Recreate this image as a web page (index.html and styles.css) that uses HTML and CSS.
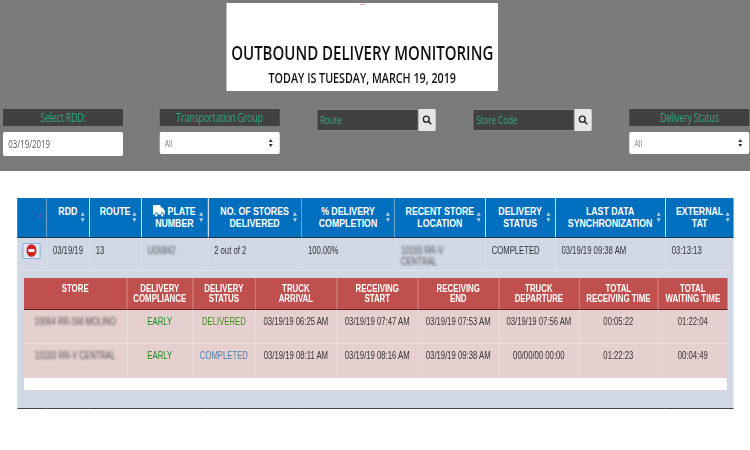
FILE: index.html
```html
<!DOCTYPE html>
<html lang="en">
<head>
    <meta charset="UTF-8">
    <title>Outbound Delivery Monitoring</title>
    <link rel="stylesheet" href="styles.css">
</head>
<body>
<div class="frame">
<div class="page">
    <div class="top-bar">
        <div class="title-box">
            <span class="broken-logo"></span>
            <h1>OUTBOUND DELIVERY MONITORING</h1>
            <h2>TODAY IS TUESDAY, MARCH 19, 2019</h2>
        </div>
        <div class="filters">
            <div class="filter">
                <div class="filter-label">Select RDD:</div>
                <div class="date-input">03/19/2019</div>
            </div>
            <div class="filter">
                <div class="filter-label">Transportation Group</div>
                <div class="select-box">All
                    <svg class="select-arrows" viewBox="0 0 8 12" preserveAspectRatio="none"><path d="M4 0l3.5 4.6H.5zM4 12L.5 7.4h7z"/></svg>
                </div>
            </div>
            <div class="search-group">
                <div class="search-field">Route</div>
                <div class="search-btn">
                    <svg viewBox="0 0 14 14" preserveAspectRatio="none"><circle cx="5.8" cy="5.8" r="4.2"/><path d="M9 9l4 4"/></svg>
                </div>
            </div>
            <div class="search-group">
                <div class="search-field">Store Code</div>
                <div class="search-btn">
                    <svg viewBox="0 0 14 14" preserveAspectRatio="none"><circle cx="5.8" cy="5.8" r="4.2"/><path d="M9 9l4 4"/></svg>
                </div>
            </div>
            <div class="filter">
                <div class="filter-label">Delivery Status</div>
                <div class="select-box">All
                    <svg class="select-arrows" viewBox="0 0 8 12" preserveAspectRatio="none"><path d="M4 0l3.5 4.6H.5zM4 12L.5 7.4h7z"/></svg>
                </div>
            </div>
        </div>
    </div>

    <div class="table-wrap">
        <table class="main-table">
            <colgroup>
                <col class="m1"><col class="m2"><col class="m3"><col class="m4"><col class="m5">
                <col class="m6"><col class="m7"><col class="m8"><col class="m9"><col class="m10">
            </colgroup>
            <thead>
                <tr>
                    <th><svg class="sort-up" viewBox="0 0 8 6" preserveAspectRatio="none"><path d="M4 0l4 6H0z"/></svg></th>
                    <th>RDD<svg class="sort" viewBox="0 0 8 12" preserveAspectRatio="none"><path d="M4 0l3.5 4.6H.5zM4 12L.5 7.4h7z"/></svg></th>
                    <th>ROUTE<svg class="sort" viewBox="0 0 8 12" preserveAspectRatio="none"><path d="M4 0l3.5 4.6H.5zM4 12L.5 7.4h7z"/></svg></th>
                    <th><svg class="truck" viewBox="0 0 20 14" preserveAspectRatio="none"><path d="M0 1.2C0 .5.5 0 1.2 0h10.3c.7 0 1.2.5 1.2 1.2V3h2.6c.4 0 .8.2 1.1.5l2.9 3c.3.3.5.7.5 1.1V11h-1.6a2.6 2.6 0 0 0-5.2 0H8a2.6 2.6 0 0 0-5.2 0H0z"/><circle cx="5.4" cy="11.6" r="1.9"/><circle cx="15.4" cy="11.6" r="1.9"/></svg> PLATE<br>NUMBER<svg class="sort" viewBox="0 0 8 12" preserveAspectRatio="none"><path d="M4 0l3.5 4.6H.5zM4 12L.5 7.4h7z"/></svg></th>
                    <th>NO. OF STORES<br>DELIVERED<svg class="sort" viewBox="0 0 8 12" preserveAspectRatio="none"><path d="M4 0l3.5 4.6H.5zM4 12L.5 7.4h7z"/></svg></th>
                    <th>% DELIVERY<br>COMPLETION<svg class="sort" viewBox="0 0 8 12" preserveAspectRatio="none"><path d="M4 0l3.5 4.6H.5zM4 12L.5 7.4h7z"/></svg></th>
                    <th>RECENT STORE<br>LOCATION<svg class="sort" viewBox="0 0 8 12" preserveAspectRatio="none"><path d="M4 0l3.5 4.6H.5zM4 12L.5 7.4h7z"/></svg></th>
                    <th>DELIVERY<br>STATUS<svg class="sort" viewBox="0 0 8 12" preserveAspectRatio="none"><path d="M4 0l3.5 4.6H.5zM4 12L.5 7.4h7z"/></svg></th>
                    <th>LAST DATA<br>SYNCHRONIZATION<svg class="sort" viewBox="0 0 8 12" preserveAspectRatio="none"><path d="M4 0l3.5 4.6H.5zM4 12L.5 7.4h7z"/></svg></th>
                    <th>EXTERNAL<br>TAT<svg class="sort" viewBox="0 0 8 12" preserveAspectRatio="none"><path d="M4 0l3.5 4.6H.5zM4 12L.5 7.4h7z"/></svg></th>
                </tr>
            </thead>
            <tbody>
                <tr class="main-row">
                    <td class="toggle-cell">
                        <span class="toggle-btn">
                            <svg viewBox="0 0 12 12" preserveAspectRatio="none"><circle cx="6" cy="6" r="5.8"/><rect x="2.6" y="4.6" width="6.8" height="2.8"/></svg>
                        </span>
                    </td>
                    <td>03/19/19</td>
                    <td>13</td>
                    <td><span class="blurred">U0X842</span></td>
                    <td>2 out of 2</td>
                    <td>100.00%</td>
                    <td><span class="blurred">10183 RR-V<br>CENTRAL</span></td>
                    <td>COMPLETED</td>
                    <td>03/19/19 09:38 AM</td>
                    <td>03:13:13</td>
                </tr>
                <tr>
                    <td class="detail-cell" colspan="10">
                        <table class="sub-table">
                            <colgroup>
                                <col class="s1"><col class="s2"><col class="s3"><col class="s4"><col class="s5">
                                <col class="s6"><col class="s7"><col class="s8"><col class="s9">
                            </colgroup>
                            <thead>
                                <tr>
                                    <th>STORE</th>
                                    <th>DELIVERY<br>COMPLIANCE</th>
                                    <th>DELIVERY<br>STATUS</th>
                                    <th>TRUCK<br>ARRIVAL</th>
                                    <th>RECEIVING<br>START</th>
                                    <th>RECEIVING<br>END</th>
                                    <th>TRUCK<br>DEPARTURE</th>
                                    <th>TOTAL<br>RECEIVING TIME</th>
                                    <th>TOTAL<br>WAITING TIME</th>
                                </tr>
                            </thead>
                            <tbody>
                                <tr>
                                    <td><span class="blurred">10064 RR-SM MOLINO</span></td>
                                    <td class="green">EARLY</td>
                                    <td class="olive">DELIVERED</td>
                                    <td>03/19/19 06:25 AM</td>
                                    <td>03/19/19 07:47 AM</td>
                                    <td>03/19/19 07:53 AM</td>
                                    <td>03/19/19 07:56 AM</td>
                                    <td>00:05:22</td>
                                    <td>01:22:04</td>
                                </tr>
                                <tr>
                                    <td><span class="blurred">10183 RR-V CENTRAL</span></td>
                                    <td class="green">EARLY</td>
                                    <td class="steel">COMPLETED</td>
                                    <td>03/19/19 08:11 AM</td>
                                    <td>03/19/19 08:16 AM</td>
                                    <td>03/19/19 09:38 AM</td>
                                    <td>00/00/00 00:00</td>
                                    <td>01:22:23</td>
                                    <td>00:04:49</td>
                                </tr>
                            </tbody>
                        </table>
                        <div class="sub-footer"></div>
                    </td>
                </tr>
            </tbody>
        </table>
    </div>
</div>
</div>
</body>
</html>
```

FILE: styles.css
```css
html, body {
    margin: 0;
    padding: 0;
    background-color: #fff;
}

.frame {
    width: 750px;
    height: 450px;
    overflow: hidden;
}

/* screenshot was squeezed sideways, so the page is laid out 1000 wide */
.page {
    width: 1000px;
    transform: scaleX(0.75);
    transform-origin: 0 0;
    font-family: "Liberation Sans", Arial, sans-serif;
}

.top-bar {
    height: 171px;
    box-sizing: border-box;
    padding-top: 3px;
    background-color: #7a7c7b;
    font-family: "Open Sans", sans-serif;
}

.title-box {
    display: flex;
    flex-direction: column;
    align-items: center;
    width: 362px;
    height: 88px;
    margin-left: 302px;
    background-color: #fff;
    color: #111;
}

.broken-logo {
    width: 7px;
    height: 1px;
    margin-top: 1px;
    background-color: #f0a0a8;
}

.title-box h1 {
    margin: 34px 0 0;
    font-size: 20px;
    line-height: 27px;
    font-weight: 600;
    white-space: nowrap;
}

.title-box h2 {
    margin: 2px 0 0;
    font-size: 14.3px;
    line-height: 20px;
    font-weight: 600;
    white-space: nowrap;
}

.filters {
    display: flex;
    justify-content: space-between;
    align-items: flex-start;
    margin-top: 18px;
    padding: 0 1px 0 4px;
}

.filter {
    width: 160px;
}

.filter-label {
    height: 17px;
    background-color: #414141;
    color: #30a87a;
    font-size: 12px;
    letter-spacing: -0.35px;
    line-height: 17px;
    text-align: center;
}

.date-input {
    height: 24px;
    margin-top: 6px;
    padding-left: 7px;
    background-color: #fff;
    border-radius: 2px;
    color: #555;
    font-size: 10.5px;
    line-height: 24px;
}

.select-box {
    display: flex;
    justify-content: space-between;
    align-items: center;
    height: 22px;
    margin-top: 6px;
    padding: 0 9px 0 7px;
    background-color: #fff;
    border-radius: 2px;
    color: #777;
    font-size: 9px;
}

.select-arrows {
    width: 6px;
    height: 8px;
    fill: #333;
}

.search-group {
    display: flex;
    width: 160px;
    height: 22px;
    box-sizing: border-box;
    padding-right: 1px;
}

.search-field {
    flex: 1;
    padding-left: 4px;
    background-color: #414141;
    border: 1px solid #8c8c8c;
    border-radius: 2px 0 0 2px;
    color: #30a87a;
    font-size: 11px;
    letter-spacing: -0.2px;
    line-height: 20px;
}

.search-btn {
    display: flex;
    justify-content: center;
    align-items: center;
    width: 23px;
    background-color: #e6e6e6;
    border-radius: 0 2px 2px 0;
}

.search-btn svg {
    width: 13px;
    height: 10px;
    fill: none;
    stroke: #222;
    stroke-width: 2;
}

.table-wrap {
    padding: 27px 0 0 23px;
}

.main-table {
    table-layout: fixed;
    width: 955px;
    border-collapse: collapse;
    background-color: #d0d7e5;
    border-bottom: 1px solid #444;
    color: #333;
    font-size: 10.3px;
}

.m1 { width: 39px; }
.m2 { width: 57px; }
.m3 { width: 69px; }
.m4 { width: 89px; }
.m5 { width: 125px; }
.m6 { width: 124px; }
.m7 { width: 121px; }
.m8 { width: 93px; }
.m9 { width: 147px; }
.m10 { width: 91px; }

.main-table > thead th {
    position: relative;
    height: 39px;
    box-sizing: border-box;
    padding: 7px 0 0;
    vertical-align: top;
    background-color: #006fbe;
    border-left: 1px solid #cfe0ee;
    border-bottom: 1px solid #1d3550;
    color: #fff;
    font-size: 11.7px;
    line-height: 12px;
    font-weight: 700;
}

.main-table > thead th:first-child {
    border-left: 0;
}

.sort {
    position: absolute;
    top: 14px;
    right: 5px;
    width: 6.5px;
    height: 10px;
    fill: #b5cfe4;
}

.sort-up {
    position: absolute;
    top: 15px;
    right: 5px;
    width: 6px;
    height: 4px;
    fill: #5a55b8;
}

.truck {
    width: 16px;
    height: 12px;
    fill: #fff;
    vertical-align: -2px;
}

.main-row td {
    height: 33px;
    box-sizing: border-box;
    padding: 7px 0 0 8px;
    vertical-align: top;
    border-left: 1px solid #dde2ec;
    line-height: 11px;
}

.main-row td:first-child {
    border-left: 0;
}

.main-row td.toggle-cell {
    padding: 5px 0 0 7px;
}

.toggle-btn {
    display: flex;
    justify-content: center;
    align-items: center;
    width: 24px;
    height: 16px;
    box-sizing: border-box;
    background-color: #dfe6f2;
    border: 1px solid #7ea6dc;
    border-radius: 1px;
}

.toggle-btn svg {
    width: 14px;
    height: 13px;
}

.toggle-btn circle {
    fill: #d2201f;
}

.toggle-btn rect {
    fill: #fff;
}

.blurred {
    display: inline-block;
    filter: blur(1.3px);
    color: #555;
}

.detail-cell {
    height: 136px;
    box-sizing: border-box;
    padding: 7px 9px 18px 9px;
    vertical-align: top;
    border-top: 1px solid #dde2ec;
}

.sub-table {
    table-layout: fixed;
    width: 938px;
    border-collapse: collapse;
    background-color: #e6cfcf;
    color: #333;
    font-size: 10.3px;
    text-align: center;
}

.s1 { width: 137px; }
.s2 { width: 88px; }
.s3 { width: 83px; }
.s4 { width: 109px; }
.s5 { width: 108px; }
.s6 { width: 108px; }
.s7 { width: 107px; }
.s8 { width: 105px; }
.s9 { width: 93px; }

.sub-table th {
    height: 32px;
    box-sizing: border-box;
    padding: 5px 0 0;
    vertical-align: top;
    background-color: #c0504d;
    border-left: 1px solid #d98a88;
    border-bottom: 1px solid #5c2a28;
    color: #fff;
    font-size: 10.5px;
    line-height: 10.5px;
    font-weight: 700;
}

.sub-table th:first-child,
.sub-table td:first-child {
    border-left: 0;
}

.sub-table td {
    height: 34px;
    box-sizing: border-box;
    padding: 6px 0 0;
    vertical-align: top;
    border-left: 1px solid #eedfdf;
    border-top: 1px solid #eedfdf;
    line-height: 11px;
}

.green { color: #1f8a1f; }
.olive { color: #3f8a1e; }
.steel { color: #4f81a8; }

.sub-footer {
    height: 12px;
    background-color: #fff;
}
```
